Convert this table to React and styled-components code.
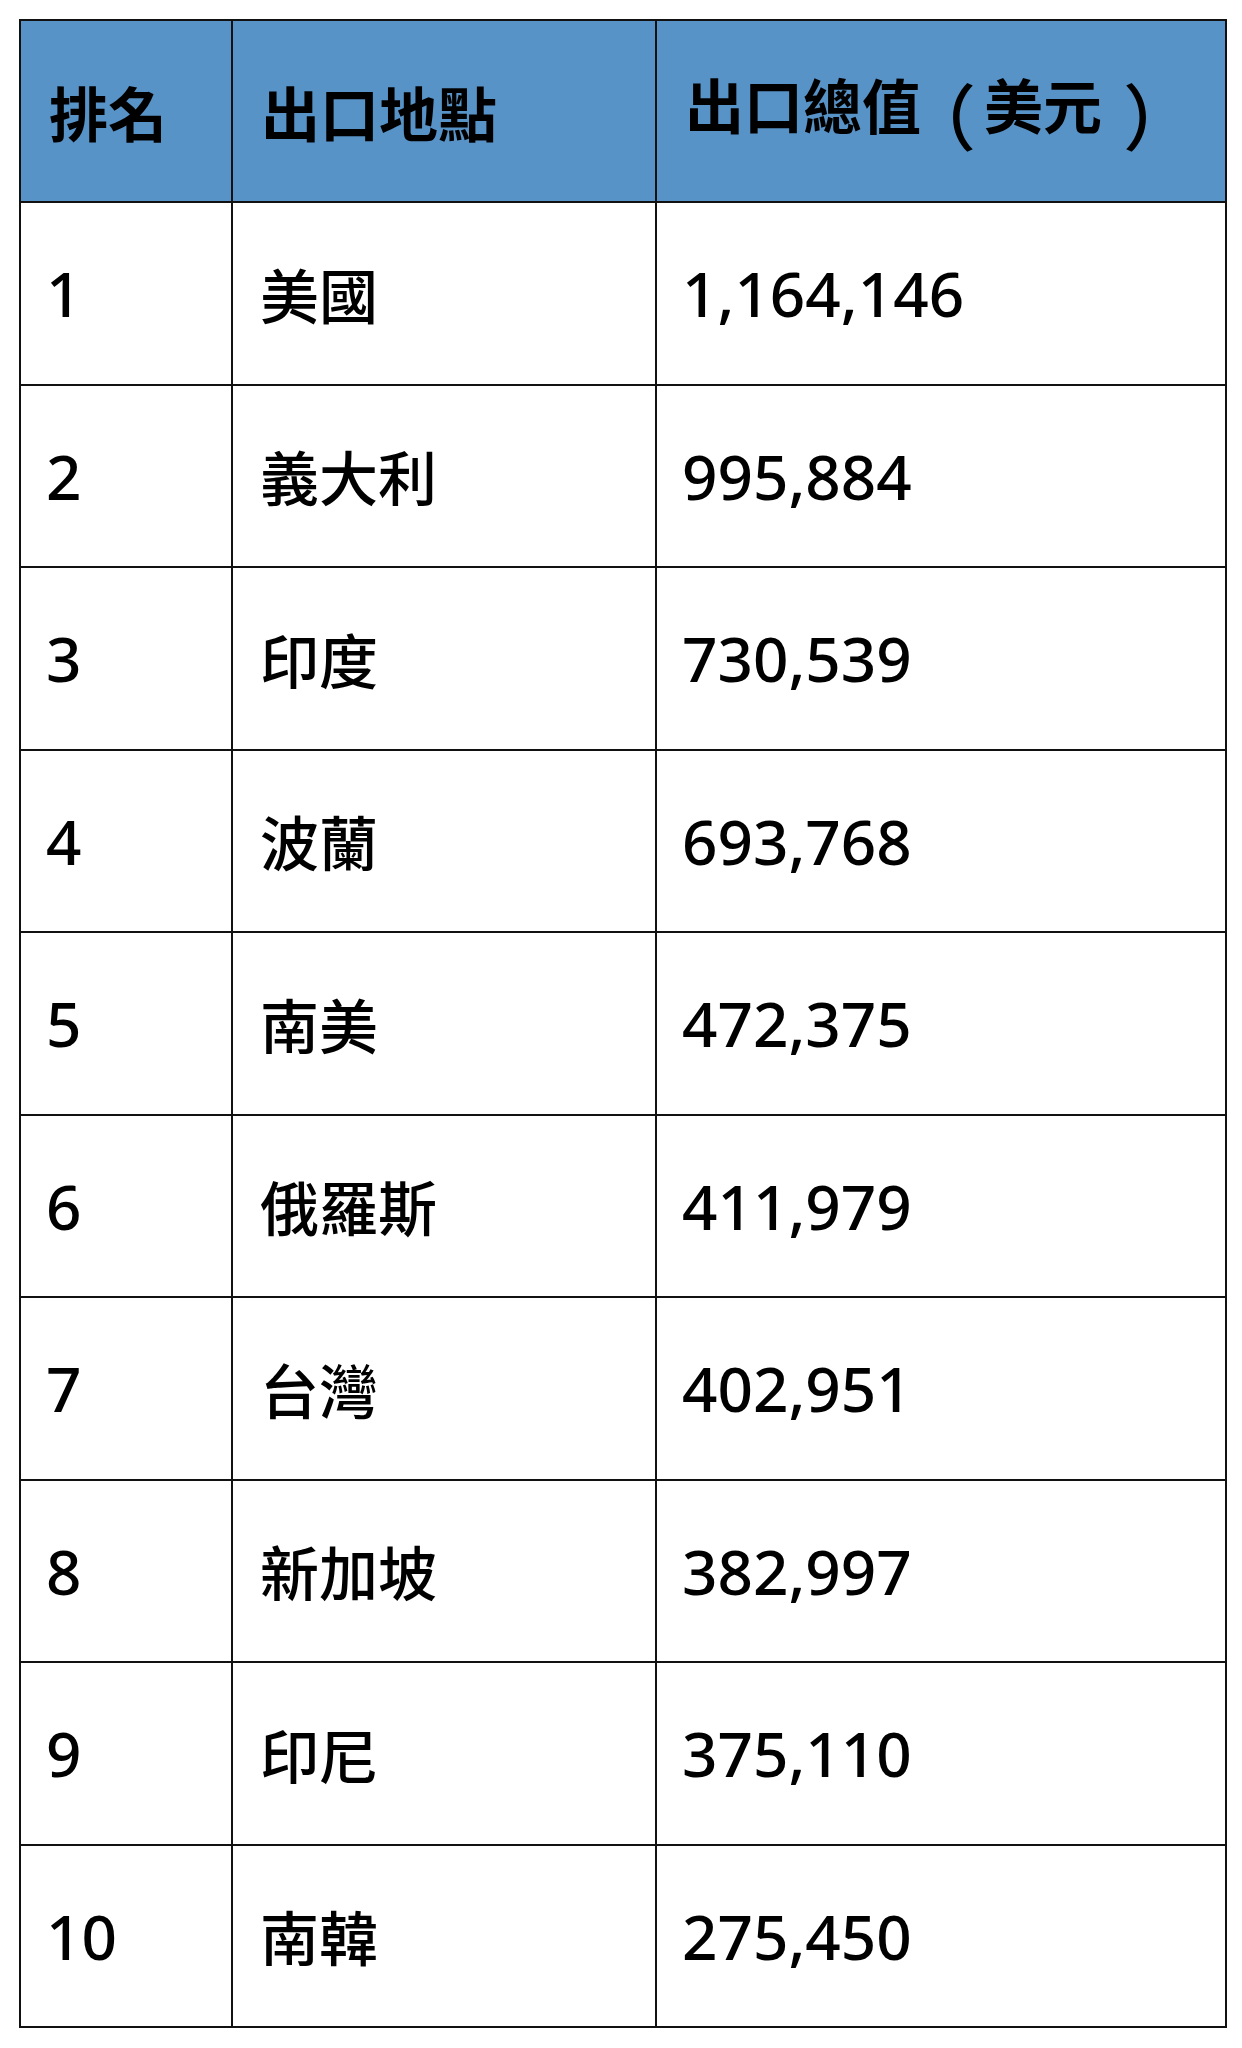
import React from "react";
import styled, { createGlobalStyle } from "styled-components";

/* ================= GLOBAL ================= */

const Global = createGlobalStyle`
  html, body {
    margin: 0;
    padding: 0;
    background: #ffffff;
  }
  body {
    font-family: "Noto Sans", "Noto Sans CJK TC", sans-serif;
    color: #000;
  }
`;

/* ================= LAYOUT ================= */

const Page = styled.div`
  padding: 19px 0 0 19px;
`;

const Table = styled.table`
  width: 1206px;
  table-layout: fixed;
  border-collapse: collapse;
  border: 2.5px solid #111;
`;

const HeadRow = styled.tr`
  height: 182px;
  background: #5893c8;
`;

const Row = styled.tr`
  height: 182.5px;
  background: #ffffff;
`;

const Th = styled.th`
  border: 2.5px solid #111;
  padding: 0 0 0 28px;
  text-align: left;
  vertical-align: middle;
  font-family: "Noto Sans CJK TC", "Noto Sans", sans-serif;
  font-size: 59px;
  font-weight: 700;
  line-height: 1;
  white-space: nowrap;
`;

/* the header's brackets are tall, sit low and apart from the words */
const Paren = styled.span`
  display: inline-block;
  font-family: "Noto Sans CJK TC", sans-serif;
  font-feature-settings: "halt";
  font-size: 72px;
  font-weight: 500;
  vertical-align: -15px;
  margin: ${({ $open }) => ($open ? "0 8px 0 19px" : "0 0 0 21px")};
`;

const Td = styled.td`
  border: 2.5px solid #111;
  padding: 0 0 0 ${({ $num }) => ($num ? "25px" : "27px")};
  text-align: left;
  vertical-align: middle;
  font-family: ${({ $num }) =>
    $num ? `"Noto Sans", sans-serif` : `"Noto Sans CJK TC", sans-serif`};
  font-size: ${({ $num }) => ($num ? "62px" : "59px")};
  font-weight: 500;
  line-height: 1;
  white-space: nowrap;
`;

/* ================= DATA ================= */

const rows = [
  { rank: 1, place: "美國", value: "1,164,146" },
  { rank: 2, place: "義大利", value: "995,884" },
  { rank: 3, place: "印度", value: "730,539" },
  { rank: 4, place: "波蘭", value: "693,768" },
  { rank: 5, place: "南美", value: "472,375" },
  { rank: 6, place: "俄羅斯", value: "411,979" },
  { rank: 7, place: "台灣", value: "402,951" },
  { rank: 8, place: "新加坡", value: "382,997" },
  { rank: 9, place: "印尼", value: "375,110" },
  { rank: 10, place: "南韓", value: "275,450" },
];

/* ================= COMPONENT ================= */

export default function App() {
  return (
    <Page>
      <Global />
      <Table>
        <colgroup>
          <col style={{ width: 212 }} />
          <col style={{ width: 424 }} />
          <col style={{ width: 570 }} />
        </colgroup>
        <thead>
          <HeadRow>
            <Th>排名</Th>
            <Th>出口地點</Th>
            <Th>
              出口總值<Paren $open>（</Paren>美元<Paren>）</Paren>
            </Th>
          </HeadRow>
        </thead>
        <tbody>
          {rows.map((r) => (
            <Row key={r.rank}>
              <Td $num>{r.rank}</Td>
              <Td>{r.place}</Td>
              <Td $num>{r.value}</Td>
            </Row>
          ))}
        </tbody>
      </Table>
    </Page>
  );
}
